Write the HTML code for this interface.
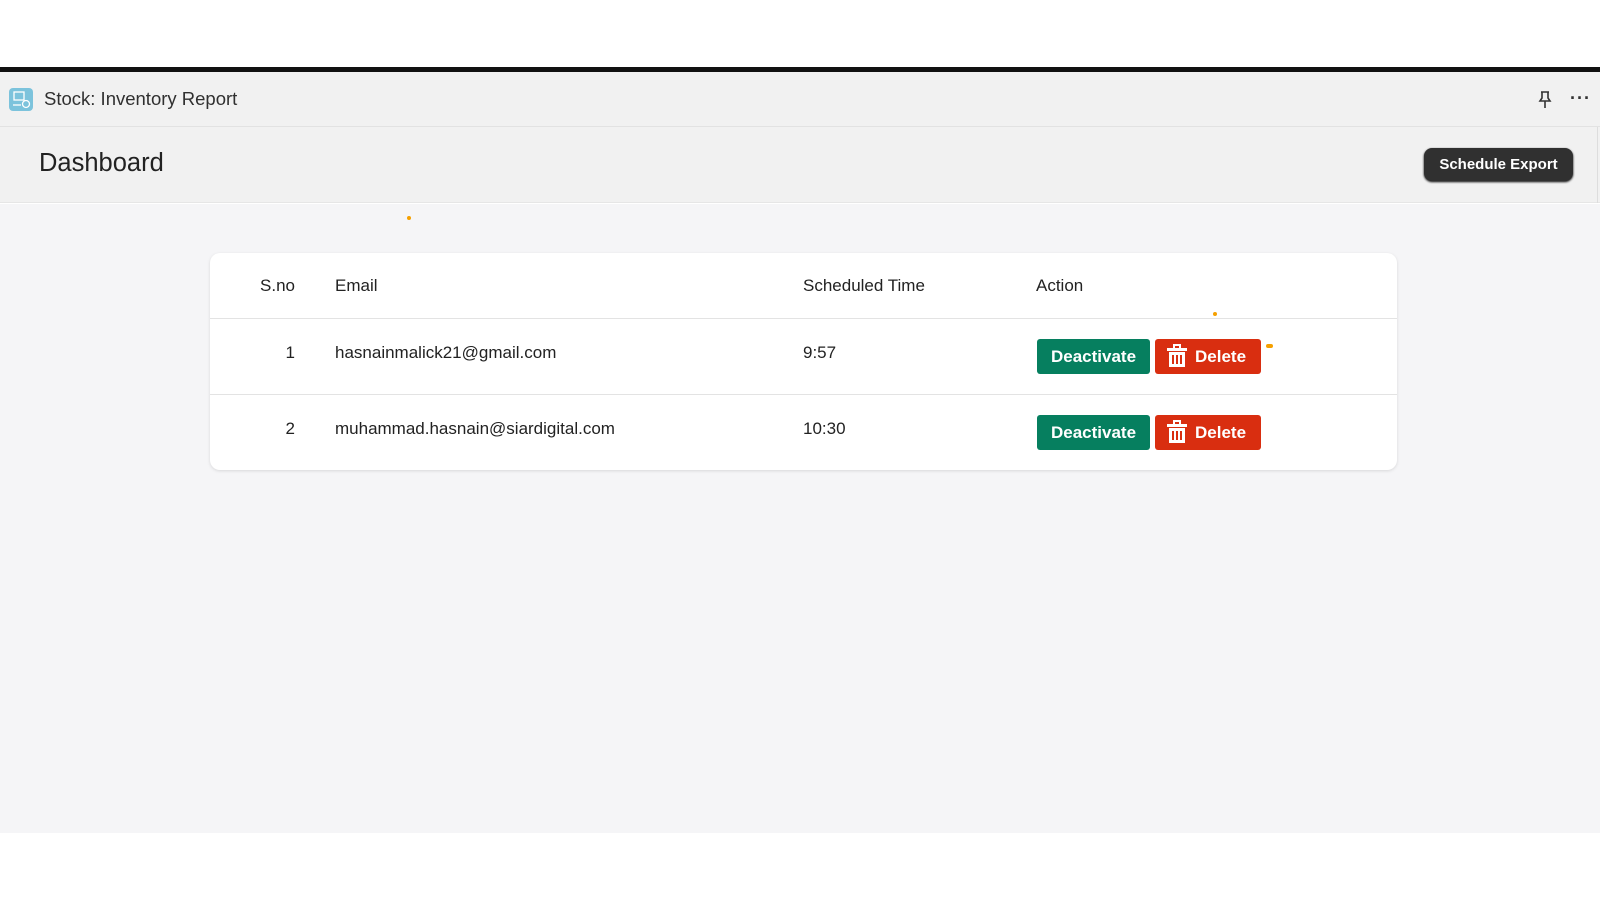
<!DOCTYPE html>
<html><head><meta charset="utf-8"><style>
*{box-sizing:border-box;margin:0;padding:0}
body{width:1600px;height:900px;background:#fff;font-family:"Liberation Sans",sans-serif;position:relative;overflow:hidden;color:#222}
.abs{position:absolute}
</style></head><body>
<div class="abs" style="left:0;top:67px;width:1600px;height:5px;background:#111"></div>
<div class="abs" style="left:0;top:72px;width:1600px;height:55px;background:#f1f1f1;border-bottom:1px solid #e2e2e2"></div>
<svg class="abs" style="left:9px;top:88px" width="24" height="23" viewBox="0 0 24 23"><rect width="24" height="23" rx="4" fill="#7cc3dc"/><rect x="5" y="4" width="10" height="8" fill="none" stroke="#fff" stroke-width="1.3"/><line x1="4" y1="17" x2="12" y2="17" stroke="#fff" stroke-width="1.3"/><circle cx="17" cy="16" r="3.5" fill="none" stroke="#fff" stroke-width="1.3"/></svg>
<div class="abs" style="left:44px;top:88px;font-size:18.5px;color:#303030">Stock: Inventory Report</div>
<svg class="abs" style="left:1538px;top:90px" width="14" height="20" viewBox="0 0 14 20" fill="none" stroke="#333" stroke-width="1.6"><path d="M3 2h8M4 2v6L2 11h10L10 8V2M7 11v7"/></svg>
<div class="abs" style="left:1570px;top:88px;font-size:18px;font-weight:bold;color:#333;letter-spacing:1px">···</div>
<div class="abs" style="left:0;top:127px;width:1600px;height:76px;background:#f1f1f1;border-bottom:1px solid #e6e6e6"></div>
<div class="abs" style="left:39px;top:149px;font-size:25.5px;color:#222">Dashboard</div>
<div class="abs" style="left:1424px;top:148px;width:149px;height:33px;background:#303030;border-radius:8px;box-shadow:0 1px 2px #000;color:#fff;font-weight:bold;font-size:15px;line-height:33px;text-align:center">Schedule Export</div>
<div class="abs" style="left:1597px;top:127px;width:1px;height:76px;background:#ddd"></div>
<div class="abs" style="left:0;top:204px;width:1600px;height:629px;background:#f5f5f7"></div>
<div class="abs" style="left:407px;top:216px;width:4px;height:4px;border-radius:2px;background:#f5a000"></div>
<div class="abs" style="left:210px;top:253px;width:1187px;height:217px;background:#fff;border-radius:10px;box-shadow:0 1px 3px rgba(0,0,0,.12)"></div>
<div class="abs" style="left:210px;top:318px;width:1187px;height:1px;background:#e3e3e3"></div>
<div class="abs" style="left:210px;top:394px;width:1187px;height:1px;background:#e3e3e3"></div>
<div class="abs" style="font-size:17px;color:#222;top:276px;left:0;width:295px;text-align:right">S.no</div>
<div class="abs" style="font-size:17px;top:276px;left:335px">Email</div>
<div class="abs" style="font-size:17px;top:276px;left:803px">Scheduled Time</div>
<div class="abs" style="font-size:17px;top:276px;left:1036px">Action</div>
<div class="abs" style="left:1213px;top:312px;width:4px;height:4px;border-radius:2px;background:#f5a000"></div>
<div class="abs" style="left:1266px;top:344px;width:7px;height:4px;border-radius:2px;background:#f5a000"></div>

<div class="abs" style="font-size:17px;top:343px;left:0;width:295px;text-align:right">1</div>
<div class="abs" style="font-size:17px;top:343px;left:335px">hasnainmalick21@gmail.com</div>
<div class="abs" style="font-size:17px;top:343px;left:803px">9:57</div>
<div class="abs" style="font-size:17px;top:419px;left:0;width:295px;text-align:right">2</div>
<div class="abs" style="font-size:17px;top:419px;left:335px">muhammad.hasnain@siardigital.com</div>
<div class="abs" style="font-size:17px;top:419px;left:803px">10:30</div>

<div class="abs" style="left:1037px;top:339px;width:113px;height:35px;background:#067f5f;border-radius:3px;color:#fff;font-weight:bold;font-size:17px;line-height:35px;text-align:center">Deactivate</div>
<div class="abs" style="left:1155px;top:339px;width:106px;height:35px;background:#d92e10;border-radius:3px;color:#fff;font-weight:bold;font-size:17px;line-height:35px;padding-left:40px">Delete</div>
<svg class="abs" style="left:1167px;top:344px" width="20" height="24" viewBox="0 0 20 24" fill="#fff"><rect x="7" y="0" width="6" height="2"/><rect x="6" y="0" width="2" height="4"/><rect x="12" y="0" width="2" height="4"/><rect x="0" y="4" width="20" height="3"/><path d="M2 8h16v15H2z M5 11v9h2v-9z M9 11v9h2v-9z M13 11v9h2v-9z" fill-rule="evenodd"/></svg>
<div class="abs" style="left:1037px;top:415px;width:113px;height:35px;background:#067f5f;border-radius:3px;color:#fff;font-weight:bold;font-size:17px;line-height:35px;text-align:center">Deactivate</div>
<div class="abs" style="left:1155px;top:415px;width:106px;height:35px;background:#d92e10;border-radius:3px;color:#fff;font-weight:bold;font-size:17px;line-height:35px;padding-left:40px">Delete</div>
<svg class="abs" style="left:1167px;top:420px" width="20" height="24" viewBox="0 0 20 24" fill="#fff"><rect x="7" y="0" width="6" height="2"/><rect x="6" y="0" width="2" height="4"/><rect x="12" y="0" width="2" height="4"/><rect x="0" y="4" width="20" height="3"/><path d="M2 8h16v15H2z M5 11v9h2v-9z M9 11v9h2v-9z M13 11v9h2v-9z" fill-rule="evenodd"/></svg>
</body></html>
